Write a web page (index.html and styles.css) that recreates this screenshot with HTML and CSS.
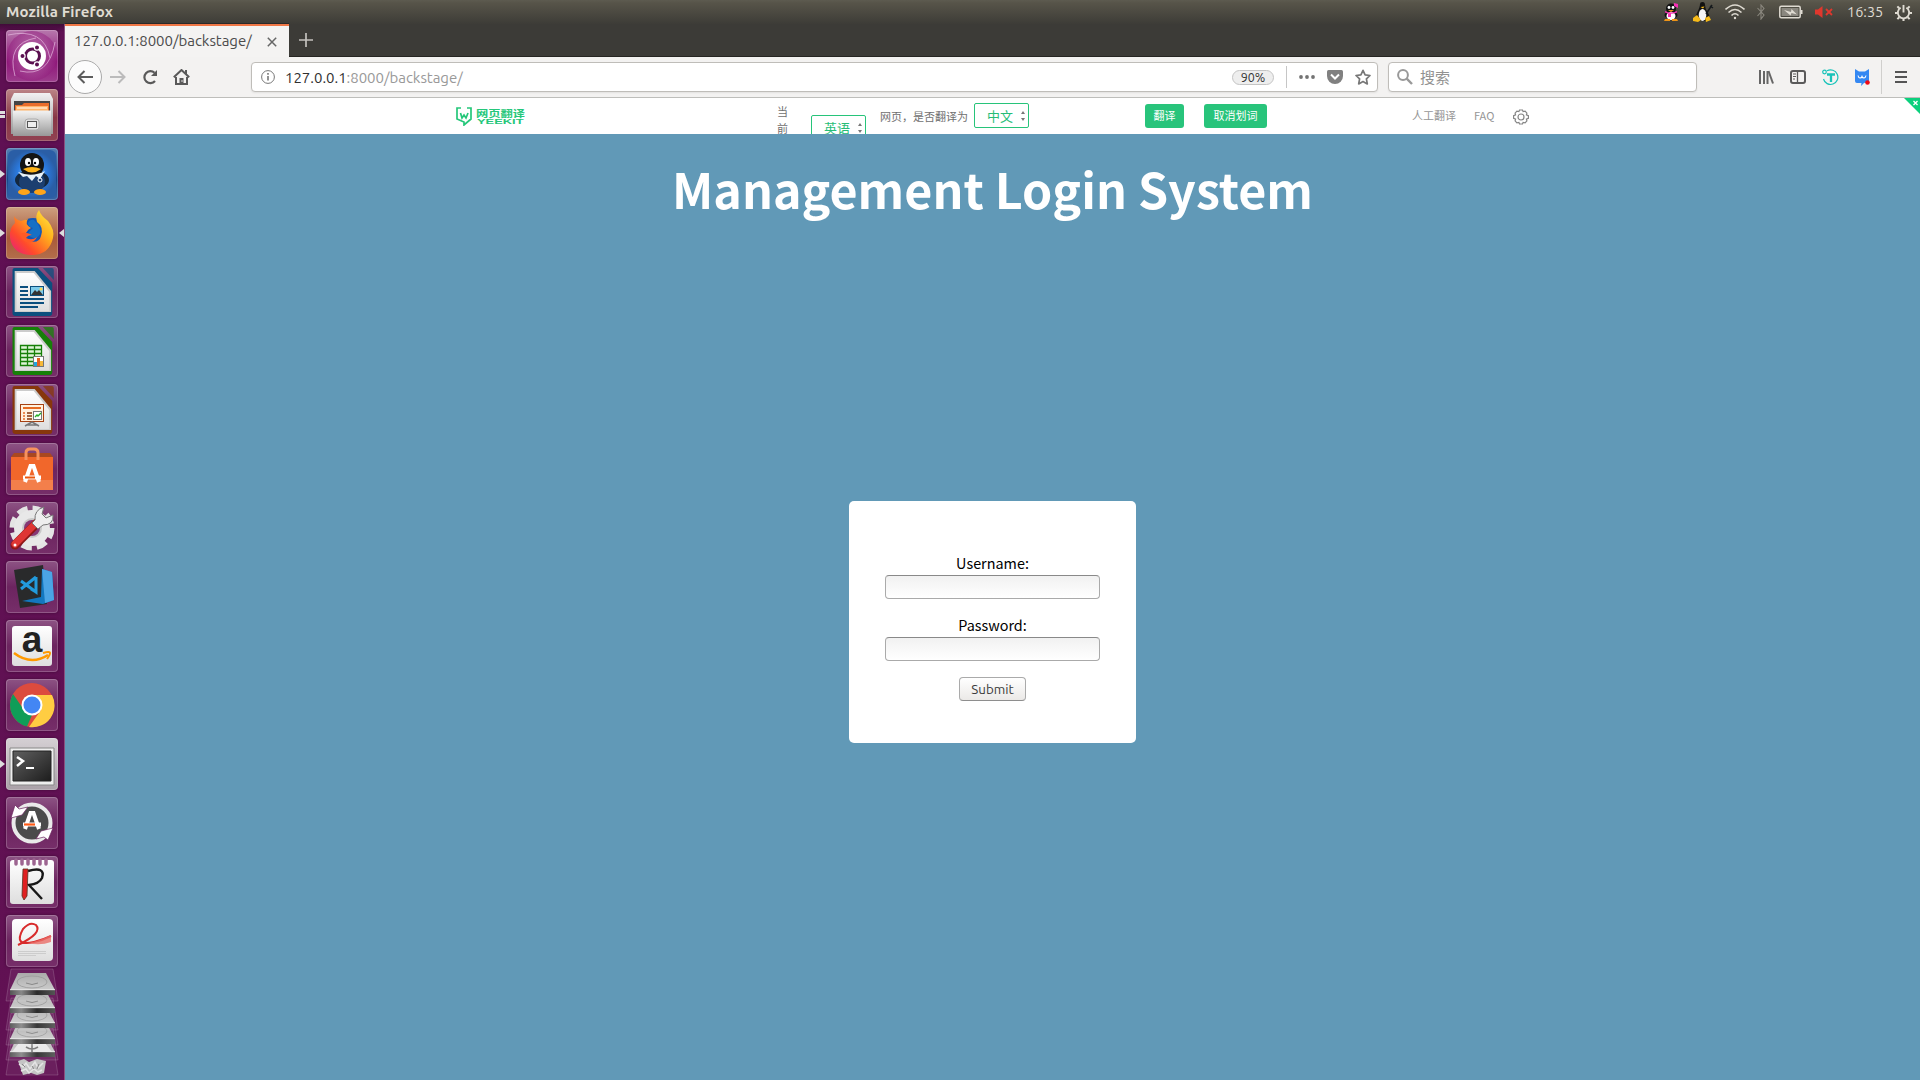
FILE: index.html
```html
<!DOCTYPE html>
<html lang="en">
<head>
<meta charset="utf-8">
<title>127.0.0.1:8000/backstage/</title>
<link rel="stylesheet" href="styles.css">
</head>
<body>
<svg width="0" height="0" class="defs" aria-hidden="true">
  <defs>
    <linearGradient id="silver" x1="0" y1="0" x2="0" y2="1"><stop offset="0" stop-color="#f2f2f2"/><stop offset="1" stop-color="#989898"/></linearGradient>
    <linearGradient id="disktop" x1="0" y1="0" x2="0" y2="1"><stop offset="0" stop-color="#aaa"/><stop offset="1" stop-color="#d6d6d6"/></linearGradient>
    <linearGradient id="diskedge" x1="0" y1="0" x2="1" y2="0"><stop offset="0" stop-color="#555"/><stop offset=".25" stop-color="#888"/><stop offset=".6" stop-color="#2b2b2b"/><stop offset="1" stop-color="#555"/></linearGradient>
    <linearGradient id="paper" x1="0" y1="0" x2="0" y2="1"><stop offset="0" stop-color="#fff"/><stop offset="1" stop-color="#dedede"/></linearGradient>
    <radialGradient id="dash"><stop offset="0" stop-color="#d4a3cb"/><stop offset="1" stop-color="#93207f"/></radialGradient>
    <radialGradient id="glow"><stop offset="0" stop-color="#b8e4ff"/><stop offset=".6" stop-color="#2b7be0"/><stop offset="1" stop-color="#2a5ea6"/></radialGradient>
    <linearGradient id="fox" x1="1" y1="0" x2="0" y2="1"><stop offset="0" stop-color="#fff14a"/><stop offset=".35" stop-color="#ffb01c"/><stop offset=".7" stop-color="#ff4a2b"/><stop offset="1" stop-color="#e3178a"/></linearGradient>
    <linearGradient id="dark" x1="0" y1="0" x2="1" y2="1"><stop offset="0" stop-color="#606060"/><stop offset="1" stop-color="#1d1d1d"/></linearGradient>
    <g id="disk"><path d="M12 0H40L49 17V22H4V17z" fill="url(#disktop)"/><path d="M4 17H49V22H4z" fill="url(#diskedge)"/><path d="M4 16.700H49" stroke="#eee" stroke-width=".8"/><ellipse cx="26" cy="9" rx="15" ry="6" fill="none" stroke="#999" stroke-width=".8"/><path d="M20 10q6 3 12 0" fill="none" stroke="#888"/></g>
    <path id="pane" d="M5 -6H47L52 26H0z" fill="#fff" fill-opacity=".06" stroke="#fff" stroke-opacity=".16"/>
    <g id="pages"><path d="M8 2H31L45 17V47Q45 50 42 50H9Q6 50 6 47V4Q6 2 8 2z" transform="translate(1 0) scale(1.120 1) translate(-1 0)"/><path d="M34 2H44Q46 2 46 4V14z" transform="translate(6 0)" fill-opacity=".75"/><path d="M9 5H31L49 25V46H9z" fill="#ccc"/><path d="M11 7H30L47 26V45H11z" fill="url(#paper)"/></g>
    <g id="aletter" fill="none" stroke="#fff" stroke-width="4"><path d="M-7 8L-1.500 -8H1.500L7 8"/><path d="M-9 3.500H9" stroke-width="4"/></g>
  </defs>
</svg>

<header class="panel">
  <span class="panel-title">Mozilla Firefox</span>
  <div class="tray">
    <svg class="t-qq" viewBox="0 0 16 18"><ellipse cx="8" cy="12" rx="6.500" ry="4" fill="#111"/><ellipse cx="8" cy="5.500" rx="5" ry="5" fill="#111"/><ellipse cx="8" cy="13" rx="4.500" ry="4" fill="#fff"/><circle cx="6" cy="4.500" r="1.400" fill="#fff"/><circle cx="10" cy="4.500" r="1.400" fill="#fff"/><path d="M2 8Q8 11 14 8V9.500Q8 12 2 9.500zM5 10h3v4H5zM11 0l4 1v4l-4-2z" fill="#f52fb4"/><path d="M5 7h6l-3 2zM2 16h5v2H1zM9 16h5l1 2H9z" fill="#ee9418"/></svg>
    <svg class="t-tux" viewBox="0 0 22 22"><path d="M8 3Q8 1 10.500 1T13 4Q13 8 16 12T15 20H6Q2 18 5 12T8 3z" fill="#111"/><ellipse cx="10.500" cy="14" rx="3.800" ry="6" fill="#f4f4f4"/><path d="M8.500 6l4-.5-1.500 2zM1 17l4-3 4 5-3 2-5-1zM13 17l4-2 2 4-5 2z" fill="#f6ba19"/><path d="M14 13L20 4M18 5l3 2" stroke="#15191c" stroke-width="1.500"/></svg>
    <svg class="t-wifi" viewBox="0 0 20 16" fill="none" stroke="#dfdbd2" stroke-width="1.600"><path d="M.5 5.500Q10-3.500 19.500 5.500M3.500 8.500Q10 2.500 16.500 8.500M6.500 11.500Q10 8 13.500 11.500"/><circle cx="10" cy="14" r="1.200" fill="#dfdbd2" stroke="none"/></svg>
    <svg class="t-bt" viewBox="0 0 8 16" fill="none" stroke="#8b887f" stroke-width="1.100"><path d="M.5 4L7 11 4 15V1L7 4.500.5 12"/></svg>
    <svg class="t-bat" viewBox="0 0 24 14"><rect x=".8" y="1.300" width="20.400" height="11.500" rx="1.500" fill="none" stroke="#dfdbd2" stroke-width="1.500"/><rect x="2.500" y="3" width="17" height="8" fill="#8a877f"/><path d="M22 5h1.500v4H22M5 5l7 2 .5-3L18 9.500l-5.500-1.500-1 2.500z" fill="#dfdbd2"/></svg>
    <svg class="t-vol" viewBox="0 0 18 14"><path d="M0 4.500h3L7.500 1v12L3 9.500H0z" fill="#e0372d"/><path d="M11 4l6 6M17 4l-6 6" stroke="#e0372d" stroke-width="1.800"/></svg>
    <span class="clock">16:35</span>
    <svg class="t-gear" viewBox="0 0 18 18" fill="none" stroke="#dfdbd2"><path d="M6 4A6 6 0 1 0 12 4" stroke-width="2"/><path d="M9 1v8" stroke-width="2"/><path d="M4.500 4.500L2.500 2.500M3 9.500H0M4.500 14l-2 2M9 15.500V18M13.500 14l2 2M15 9.500h3M13.500 4.500l2-2" stroke-width="2.200"/></svg>
  </div>
</header>

<div class="desktop">
<nav class="launcher">
  <div class="tile dash"><svg viewBox="0 0 52 52"><circle cx="26" cy="26" r="25" fill="url(#dash)" opacity=".55"/><path d="M2 5Q38-3 44 28M49 12Q43 48 14 41M9 46Q0 13 30 8" fill="none" stroke="#e6b9df" opacity=".7"/><circle cx="26" cy="26" r="14" fill="#fff"/><circle cx="26.500" cy="26" r="7" fill="none" stroke="#5b1050" stroke-width="3"/><g fill="#5b1050" stroke="#fff" stroke-width="1.200"><circle cx="16.500" cy="26" r="2.600"/><circle cx="31" cy="17.500" r="2.600"/><circle cx="31" cy="34.500" r="2.600"/></g></svg></div>
  <div class="tile files running two"><svg viewBox="0 0 52 52"><path d="M8 4H44L47 10V45H5V10z" fill="url(#silver)"/><path d="M8 12H44V24H8z" fill="#444"/><path d="M9 16H16L18 14H43V24H9z" fill="#e96d2b"/><path d="M10 17H42V23H10z" fill="#ffb469"/><path d="M11 19H41" stroke="#fff"/><path d="M7 22H45V47H7z" fill="url(#silver)"/><path d="M7 22H45" stroke="#eee"/><rect x="19" y="30" width="14" height="11" rx="3" fill="#e0e0e0" stroke="#aaa"/><rect x="21.500" y="32.500" width="9" height="6" fill="#eee" stroke="#555"/></svg></div>
  <div class="tile qq running"><svg viewBox="0 0 52 52"><rect x="2" y="2" width="48" height="48" rx="6" fill="url(#glow)"/><ellipse cx="26" cy="32" rx="17" ry="10" fill="#14283f"/><ellipse cx="26" cy="34" rx="13" ry="11" fill="#1c3f70"/><ellipse cx="26" cy="17" rx="12" ry="12" fill="#151515"/><path d="M12 24Q26 30 39 23L34 31 30 28 26 33 21 28 17 29z" fill="#e8f3fa"/><ellipse cx="22" cy="14" rx="3" ry="4" fill="#fff"/><ellipse cx="30" cy="14" rx="3" ry="4" fill="#fff"/><circle cx="23" cy="15" r="1.200"/><circle cx="29" cy="15" r="1.200"/><path d="M17 21Q26 17 35 21Q26 28 17 21z" fill="#ffb419"/><ellipse cx="18" cy="44" rx="6" ry="3" fill="#ffa51a"/><ellipse cx="34" cy="44" rx="6" ry="3" fill="#ffa51a"/><circle cx="34" cy="32" r="2" fill="none" stroke="#fff"/></svg></div>
  <div class="tile firefox running active"><svg viewBox="0 0 52 52"><circle cx="27" cy="26" r="15" fill="#1456b5"/><path d="M8 9Q10 13 15 14L22 12Q18 17 25 21Q22 22 20 26Q15 31 23 34Q33 37 35 29Q38 20 31 15Q29 8 33 3Q35 9 42 14Q49 23 47 31Q43 48 26 48Q7 48 4 31Q3 21 9 16z" fill="url(#fox)"/><path d="M22 16Q24 12 28 13Q36 20 34 27Q31 33 25 30Q22 29 23 25L27 21Q22 20 22 16z" fill="#1670c5"/><path d="M14 27Q19 24 26 28Q22 28 20 31Q26 34 31 30Q28 37 20 35Q15 32 14 27z" fill="#ff5a26"/></svg></div>
  <div class="tile"><svg viewBox="0 0 52 52"><g class="sheet"><use href="#pages" fill="#0c4f7e"/></g><path d="M14 21h8M14 25h8M14 29h8M14 33h24M14 37h24M14 41h18" stroke="#0c4f7e" stroke-width="2"/><rect x="24.500" y="20.500" width="13" height="9" fill="#7ecbea" stroke="#0c4f7e"/><path d="M25 29l4-5 2 2 2-2 4 5z" fill="#333"/><circle cx="35" cy="23" r="1.500" fill="#ffd84c"/></svg></div>
  <div class="tile"><svg viewBox="0 0 52 52"><g class="sheet"><use href="#pages" fill="#168008"/></g><path d="M14.500 20.500h21v20h-21zM14.500 24.500h21M14.500 28.500h21M14.500 32.500h21M14.500 36.500h21M21.500 20v20M28.500 20v20" fill="#dff5d7" stroke="#168008" stroke-width="1.300"/><rect x="27.500" y="31.500" width="10" height="10" fill="#fff" stroke="#777"/><path d="M28 37h3v4h-3z" fill="#21a5df"/><path d="M31 33h3v8h-3z" fill="#e56221"/><path d="M34 36h3v5h-3z" fill="#f7b938"/></svg></div>
  <div class="tile"><svg viewBox="0 0 52 52"><g class="sheet"><use href="#pages" fill="#87370c"/></g><rect x="14.500" y="20.500" width="23" height="17" fill="#fff0dc" stroke="#a64112"/><path d="M17 24h18" stroke="#e56a22" stroke-width="2"/><path d="M21 29h5M21 32h5M21 35h5" stroke="#87370c" stroke-width="1.500"/><path d="M17 29h2M17 32h2M17 35h2" stroke="#e56a22" stroke-width="1.500"/><rect x="27.500" y="27.500" width="8" height="8" fill="#fff" stroke="#777"/><path d="M29 33l2-2 1 1 3-3" fill="none" stroke="#28b128" stroke-width="1.400"/><path d="M26 38l-7 4M26 38l7 4M21 41h10" stroke="#777" stroke-width="1.500"/></svg></div>
  <div class="tile"><svg viewBox="0 0 52 52"><path d="M5 14L8 10H44L47 14z" fill="#a94820"/><path d="M5 14H47V47H5z" fill="#f1672b"/><path d="M5 37H47V47H5z" fill="#f37f4b"/><path d="M20 17V10Q20 6 24 6H28Q32 6 32 10V17" fill="none" stroke="#f6925f" stroke-width="3"/><use href="#aletter" x="26" y="31"/><path d="M19 34.500h10" stroke="#ea570e" stroke-width="2"/></svg></div>
  <div class="tile"><svg viewBox="0 0 52 52"><circle cx="26" cy="26" r="19" fill="none" stroke="#e4e4e4" stroke-width="7" stroke-dasharray="10 4.920"/><circle cx="26" cy="26" r="14" fill="#c8c8c8" stroke="#e8e8e8" stroke-width="8"/><circle cx="26" cy="26" r="8" fill="#863875"/><path d="M9 43L31 21" stroke="#8f1717" stroke-width="9" stroke-linecap="round"/><path d="M9 42L30 21" stroke="#df3634" stroke-width="7" stroke-linecap="round"/><path d="M29 18Q28 8 38 5L36 12 40 16 47 13Q48 23 37 23L32 27 26 21z" fill="#eee" stroke="#777"/><circle cx="9" cy="43" r="1.500" fill="#fff"/></svg></div>
  <div class="tile"><svg viewBox="0 0 52 52"><path d="M8 9L37 4 41 43 14 47z" fill="#292a2b"/><path d="M36 8L46 11 48 39 37 43 16 40 35 36z" fill="#1277bf"/><path d="M36 8L46 11 48 39 39 42z" fill="#4ba4e5"/><path d="M30 16V31L15 20M30 16L15 28M30 31L25 28" fill="none" stroke="#229bdd" stroke-width="3"/></svg></div>
  <div class="tile"><svg viewBox="0 0 52 52"><rect x="6" y="6" width="40" height="40" rx="3" fill="url(#paper)"/><text x="26" y="32" text-anchor="middle" class="amazon">a</text><path d="M8 33Q25 46 42 35" fill="none" stroke="#f90" stroke-width="2.500"/><path d="M37 33Q44 31 44 33T41 39" fill="none" stroke="#f90" stroke-width="2"/></svg></div>
  <div class="tile"><svg viewBox="0 0 52 52"><circle cx="26" cy="26" r="22" fill="#dc4b3e"/><path d="M7 15L18 31 26 36 21 47.500A22 22 0 0 1 7 15z" fill="#109d58"/><path d="M26 16H46A22 22 0 0 1 23 48L35 31z" fill="#ffcd42"/><circle cx="26" cy="26" r="10.500" fill="#fff"/><circle cx="26" cy="26" r="8.500" fill="#4386f4"/></svg></div>
  <div class="tile terminal running"><svg viewBox="0 0 52 52"><path d="M4 10H48V47H4z" fill="#eee" stroke="#888"/><path d="M7 13H45V43H7z" fill="url(#dark)" stroke="#222"/><path d="M11 19l6 4-6 5" fill="none" stroke="#fff" stroke-width="2.500"/><path d="M20 30h8" stroke="#fff" stroke-width="2"/></svg></div>
  <div class="tile"><svg viewBox="0 0 52 52"><circle cx="26" cy="26" r="17" fill="#4b4b4b"/><circle cx="26" cy="26" r="18.500" fill="none" stroke="#eaeaea" stroke-width="4"/><path d="M5 21L9 8 13 12 22 10 16 18zM47 31L42 43 38 40 30 42 35 34z" fill="#fff" stroke="#6c245f" stroke-width=".7"/><use href="#aletter" x="26" y="24"/><path d="M18 27.500h11" stroke="#ff5b17" stroke-width="2.200"/></svg></div>
  <div class="tile"><svg viewBox="0 0 52 52"><rect x="4" y="4" width="44" height="44" rx="3" fill="url(#paper)"/><path d="M10 4v4M16 4v4M22 4v4M28 4v4M34 4v4M40 4v4" stroke="#9d6591" stroke-width="3.500" stroke-linecap="round"/><path d="M22 15Q40 10 36 22Q33 28 23 29L36 43" fill="none" stroke="#171717" stroke-width="2.400"/><path d="M17 13h5l-1 27-3 4-2-4z" fill="#e02020" stroke="#532" stroke-width=".8"/></svg></div>
  <div class="tile"><svg viewBox="0 0 52 52"><rect x="6" y="4" width="41" height="42" rx="4" fill="url(#paper)"/><path d="M12 30Q37 18 30 10Q24 6 17 14Q7 32 28 27Q37 25 45 21" fill="none" stroke="#d82b2b" stroke-width="2"/><path d="M22 28Q33 26 45 20V27Q34 31 22 28z" fill="#ea6e68" opacity=".8"/><path d="M12 36.500h28M12 38.500h28M12 40.500h18" stroke="#ccc"/></svg></div>
  <svg class="stack" viewBox="0 0 56 112"><g transform="translate(2 0)"><use href="#pane" y="81"/><use href="#disk" y="67"/><path d="M12 76H40L46 84H6z" fill="#e8e8e8"/><path d="M20 79q6 4 12 0M26 76v8" fill="none" stroke="#777" stroke-width="1.600"/><use href="#pane" y="66"/><use href="#disk" y="54"/><use href="#pane" y="51"/><use href="#disk" y="38"/><use href="#pane" y="36"/><use href="#disk" y="23"/><use href="#pane" y="7"/><use href="#disk" y="5"/><path d="M12 93L18 91 23 94 31 91 40 93 38 105 31 107 25 105 17 107z" fill="#c4c4c4"/><path d="M13 96l4 3 3-4 4 6 5-7 3 6 5-5M15 103l5-2 3 4 5-4 4 3 4-2" fill="none" stroke="#e5e5e5" stroke-width="1.500"/><path d="M16 96l3 3M26 98l2 3M33 96l-2 5" stroke="#888"/></g></svg>
</nav>

<main class="browser">
  <div class="tabs">
    <div class="tab"><span class="tab-label">127.0.0.1:8000/backstage/</span><svg class="close" viewBox="0 0 10 10"><path d="M.8.8l8.400 8.400M9.200.8L.8 9.200" stroke="#666" stroke-width="1.500"/></svg></div>
    <svg class="newtab" viewBox="0 0 14 14"><path d="M7 0v14M0 7h14" stroke="#c3c1bd" stroke-width="1.700"/></svg>
  </div>
  <div class="toolbar">
    <div class="back"><svg width="16" height="14" viewBox="0 0 16 14" fill="none" stroke="#5c5c5c" stroke-width="2"><path d="M16 7H1.500M7.500 1L1.500 7l6 6"/></svg></div>
    <div class="slot"><svg width="16" height="14" viewBox="0 0 16 14" fill="none" stroke="#bbb" stroke-width="2"><path d="M0 7h14.500M8.500 1l6 6-6 6"/></svg></div>
    <div class="slot"><svg width="16" height="16" viewBox="0 0 16 16" fill="none" stroke="#595959" stroke-width="2.200"><path d="M13 12A6 6 0 1 1 12.500 3.800"/><path d="M15 1v6H9z" fill="#595959" stroke="none"/></svg></div>
    <div class="slot home"><svg width="17" height="16" viewBox="0 0 17 16"><path d="M3 8v7h11V8M.8 8.300L8.500 1l7.700 7.300M13 1v4" fill="none" stroke="#595959" stroke-width="2"/><path d="M6.500 9h4v6h-4z" fill="#595959"/><circle cx="9" cy="12" r=".8" fill="#eee"/></svg></div>
    <div class="urlbar">
      <svg class="info" viewBox="0 0 14 14"><circle cx="7" cy="7" r="6.400" fill="none" stroke="#777"/><path d="M7 6v4.500M7 3v1.800" stroke="#777" stroke-width="1.600"/></svg>
      <span class="url"><b>127.0.0.1</b>:8000/backstage/</span>
      <span class="zoom">90%</span><i class="rule"></i>
      <svg class="dots" viewBox="0 0 16 4" fill="#737373"><circle cx="2" cy="2" r="1.900"/><circle cx="8" cy="2" r="1.900"/><circle cx="14" cy="2" r="1.900"/></svg>
      <svg class="pocket" viewBox="0 0 16 14"><path d="M1.500 0h13Q16 0 16 1.500V6a8 8 0 0 1-16 0V1.500Q0 0 1.500 0z" fill="#808080"/><path d="M4 4.500l4 4 4-4" fill="none" stroke="#fff" stroke-width="2"/></svg>
      <svg class="star" viewBox="0 0 16 16"><path d="M8 1.300l2.100 4.500 4.900.7-3.600 3.400.9 5L8 12.500l-4.300 2.400.9-5L1 6.500l4.900-.7z" fill="none" stroke="#777" stroke-width="1.700" stroke-linejoin="round"/></svg>
    </div>
    <div class="search"><svg width="16" height="16" viewBox="0 0 16 16" fill="none" stroke="#999"><circle cx="6" cy="6" r="4.900" stroke-width="2"/><path d="M9.700 9.700L15 15" stroke-width="2.400"/></svg><span>搜索</span></div>
    <div class="tools">
      <div class="slot"><svg width="16" height="14" viewBox="0 0 16 14" stroke="#666" stroke-width="2"><path d="M2 0v14M6 1v13M9.500 1v13" fill="none"/><path d="M10.500 1L15 13.500" fill="none"/></svg></div>
      <div class="slot"><svg width="16" height="14" viewBox="0 0 16 14" fill="none" stroke="#5a5a5a"><rect x="1" y="1" width="14" height="12" rx="2" stroke-width="2"/><path d="M7.500 1v12" stroke-width="1.300"/><path d="M3 4h3M3 6.500h3M3 9h2"/></svg></div>
      <div class="slot"><svg width="17" height="17" viewBox="0 0 17 17" fill="none" stroke="#18c3b9"><path d="M5 1.800A7.300 7.300 0 1 1 1.500 10" stroke-width="1.200"/><circle cx="2.500" cy="3" r="1.800" stroke-width="1.200"/><path d="M5 5.500h8M9 5v8" stroke-width="2.300"/></svg></div>
      <div class="slot"><svg width="16" height="17" viewBox="0 0 16 17"><path d="M1 0l4 2.500h6L15 0v12.500L10 14l-3 3 .5-3H3Q1 14 1 12z" fill="#3488f2"/><path d="M4 6.500Q4.500 9 6 9T8 7.500Q8.500 9 10 9T12 6.500" fill="none" stroke="#fff" stroke-width="1.100"/><circle cx="13.500" cy="13.500" r="2.300" fill="#f00914"/></svg></div>
      <div class="slot menu"><svg width="12" height="12" viewBox="0 0 12 12" stroke="#555" stroke-width="2"><path d="M0 1h12M0 6h12M0 11h12"/></svg></div>
    </div>
  </div>

  <div class="translate">
    <div class="logo">
      <svg class="mark" viewBox="0 0 17 19"><path d="M5 1H1v11l7 3v3l7-6V1h-4M1 3v6M4.500 6l1.500 5L8 8l2 3 2-5" fill="none" stroke="#25c77a" stroke-width="1.700"/></svg>
      <svg class="wordmark" viewBox="0 0 49 18"><text transform="translate(0 9.500) scale(1.020 .78)" class="logo-cn">网页翻译</text><text transform="translate(1 16.500) scale(1.720 1)" class="logo-en">YEEKIT</text></svg>
    </div>
    <span class="current">当前</span>
    <span class="select first">英语<svg viewBox="0 0 6 12"><path d="M1 4l2-3 2 3zM1 8l2 3 2-3z"/></svg></span>
    <span class="question">网页，是否翻译为</span>
    <span class="select">中文<svg viewBox="0 0 6 12"><path d="M1 4l2-3 2 3zM1 8l2 3 2-3z"/></svg></span>
    <span class="green go">翻译</span>
    <span class="green cancel">取消划词</span>
    <span class="link human">人工翻译</span>
    <span class="link faq">FAQ</span>
    <svg class="cog" viewBox="0 0 16 16" fill="none" stroke="#858585" stroke-width="1.200"><circle cx="8" cy="8" r="3"/><path d="M6.500 1h3l.6 1.600 2-.5 1.800 2-.5 1.800 2 .8v2.600l-2 .8.5 1.800-1.800 2-2-.5L9.500 15h-3l-.6-1.600-2 .5-1.800-2 .5-1.800-2-.8V6.700l2-.8-.5-1.800 1.800-2 2 .5z"/></svg>
    <svg class="corner" viewBox="0 0 16 16"><path d="M0 0h16v16z" fill="#0bd07d"/><path d="M9.500 3l4 4M13.500 3l-4 4" stroke="#fff" stroke-width="1.300"/></svg>
  </div>

  <section class="page">
    <h1>Management Login System</h1>
    <form class="card">
      <label for="user">Username:</label>
      <input id="user" type="text">
      <label for="pass">Password:</label>
      <input id="pass" type="password">
      <button type="button">Submit</button>
    </form>
  </section>
</main>
</div>
</body>
</html>
```
FILE: styles.css
```css
* { box-sizing: border-box; }
body { margin: 0; width: 1920px; height: 1080px; overflow: hidden; font-family: Ubuntu, "Noto Sans", "Noto Sans CJK SC", sans-serif; }
svg { display: block; flex: none; }
.defs { position: absolute; }

.panel { height: 24px; display: flex; align-items: center; justify-content: space-between; padding: 0 8px 0 6px; color: #dfdbd2; background: linear-gradient(#5d5b50, #575449 12%, #3d3c37); }
.panel-title { font-size: 15px; font-weight: 700; line-height: 24px; letter-spacing: .13px; }
.tray { display: flex; align-items: center; height: 24px; }
.t-qq { width: 16px; height: 18px; margin-right: 13px; }
.t-tux { width: 22px; height: 22px; margin-right: 11px; }
.t-wifi { width: 20px; height: 16px; margin-right: 12px; }
.t-bt { width: 8px; height: 16px; margin-right: 14px; }
.t-bat { width: 24px; height: 14px; margin-right: 12px; }
.t-vol { width: 18px; height: 14px; margin-right: 14px; }
.clock { width: 37px; font-size: 14.500px; line-height: 24px; margin-right: 11px; white-space: nowrap; }
.t-gear { width: 17px; height: 17px; }

.desktop { display: flex; height: 1056px; }
.launcher { width: 65px; flex: none; padding: 6px 0 0 6px; background: linear-gradient(#410b39, #5f1053 8px, #611153); border-right: 1px solid #89507f; display: flex; flex-direction: column; gap: 7px; }
.tile { position: relative; width: 52px; height: 52px; flex: none; border-radius: 4px; background: linear-gradient(#8d5384, #6c245f 50%, #762e69); box-shadow: inset 0 0 0 1px rgba(255,255,255,.2), 0 0 3px rgba(30,0,25,.5); }
.tile svg { width: 52px; height: 52px; }
.sheet { transform: translate(.5px, 0) scale(.91, 1); }
.dash { background: linear-gradient(#b778ad, #8e1578 60%, #9d3e8d); }
.files { background: linear-gradient(#bc8587, #883745 55%, #914252); }
.qq { background: linear-gradient(#537fb4, #17478a 60%, #3665a6); }
.firefox { background: linear-gradient(#cda080, #aa5a3a 60%, #b36e4b); }
.terminal { background: linear-gradient(#d5d0d4, #aaa1a8); }
.running::before, .active::after { content: ""; position: absolute; top: 22px; border: 4px solid transparent; }
.running::before { left: -6px; border-left: 5px solid #ddd; border-right: 0; }
.active::after { right: -6px; border-right: 5px solid #ddd; border-left: 0; }
.two::before { top: 22px; width: 5px; height: 1px; border: solid #ddd; border-width: 3px 0; }
.amazon { font: 700 37px "Liberation Sans", sans-serif; fill: #222; }
.stack { width: 56px; height: 112px; margin: -6px 0 0 -2px; }

.browser { flex: 1; min-width: 0; display: flex; flex-direction: column; }
.tabs { height: 33px; flex: none; display: flex; align-items: flex-start; background: #3c3b37; border-bottom: 1px solid #262522; }
.tab { width: 224px; height: 33px; flex: none; display: flex; align-items: center; padding: 0 12px 0 9px; background: #f4f3f2; border-top: 2px solid #f07746; box-shadow: 0 -1px #2c2a29; }
.tab-label { flex: 1; color: #4c4c4c; font-size: 15px; line-height: 29px; padding-bottom: 2px; letter-spacing: -.03px; white-space: nowrap; }
.close { width: 10px; height: 10px; }
.newtab { width: 14px; height: 14px; margin: 9px 0 0 10px; }
.toolbar { height: 41px; flex: none; display: flex; align-items: center; padding: 0 3px; background: #f3f2f1; border-bottom: 1px solid #bebebb; }
.back { width: 34px; height: 34px; border: 1px solid #aaa; border-radius: 50%; background: #fcfcfc; display: flex; align-items: center; justify-content: center; }
.slot { width: 32px; height: 34px; display: flex; align-items: center; justify-content: center; }
.home { padding-right: 1px; }
.urlbar, .search { height: 30px; flex: none; display: flex; align-items: center; border: 1px solid #bfbdb9; border-radius: 4px; background: #fff; box-shadow: 0 1px 2px rgba(0,0,0,.07); }
.urlbar { width: 1127px; margin: 0 10px 0 53px; padding: 0 6px 0 9px; }
.info { width: 14px; height: 14px; margin-right: 10px; }
.url { flex: 1; color: #999; font-size: 15px; line-height: 28px; padding-top: 1px; letter-spacing: -.03px; }
.url b { color: #303030; font-weight: 400; }
.zoom { width: 42px; height: 15px; border: 1px solid #c4c4c4; border-radius: 8px; background: #eee; color: #333; font-size: 12.500px; line-height: 13px; text-align: center; }
.rule { width: 1px; height: 22px; margin: 0 12px 0 12px; background: #c6c6c6; }
.dots { width: 16px; height: 4px; margin-right: 12px; }
.pocket { width: 16px; height: 14px; margin-right: 12px; }
.star { width: 16px; height: 16px; }
.search { width: 309px; padding-left: 8px; gap: 7px; color: #929292; font: 15px/28px "Noto Sans CJK SC", sans-serif; }
.tools { display: flex; margin-left: auto; }
.menu { width: 39px; margin-left: 3px; margin-right: -3px; padding-left: 13px; border-left: 1px solid #d0cfcd; justify-content: flex-start; }

.translate { position: relative; height: 36px; flex: none; overflow: hidden; display: flex; align-items: flex-start; background: #fff; font-family: "Noto Sans CJK SC", sans-serif; font-size: 11px; color: #6f6f6f; white-space: nowrap; }
.logo { width: 69px; height: 19px; flex: none; display: flex; gap: 3px; margin: 9px 0 0 391px; }
.mark { width: 17px; height: 19px; }
.wordmark { width: 49px; height: 18px; }
.logo-cn { font: 700 12px "Noto Sans CJK SC", sans-serif; fill: #25c77a; }
.logo-en { font: 700 7.500px "Liberation Sans", sans-serif; fill: #25c77a; }
.current { width: 11px; margin: 5px 23px 0 252px; line-height: 17px; white-space: normal; }
.select { width: 55px; height: 25px; flex: none; display: flex; align-items: center; justify-content: space-between; margin-top: 5px; padding: 0 2px 0 12px; border: 1px solid #27c47a; border-radius: 2px; color: #27bd77; font-size: 13px; line-height: 25px; }
.select svg { width: 6px; height: 12px; fill: #777; }
.first { margin: 17px 14px 0 0; }
.question { width: 94px; line-height: 36px; }
.green { height: 24px; margin-top: 6px; border-radius: 3px; background: #28c47b; color: #fff; line-height: 23px; text-align: center; }
.go { width: 39px; margin-left: 116px; }
.cancel { width: 63px; margin-left: 20px; }
.link { color: #969696; line-height: 35px; }
.human { width: 44px; margin-left: 145px; }
.faq { width: 22px; margin-left: 18px; }
.cog { width: 16px; height: 16px; margin: 11px 0 0 17px; }
.corner { position: absolute; top: 0; right: 0; width: 16px; height: 16px; }

.page { flex: 1; display: flex; flex-direction: column; align-items: center; background: #6199b7; font-family: "Noto Sans CJK SC", sans-serif; }
h1 { margin: 17px 0 0; color: #fff; font-size: 48.400px; line-height: 74px; font-weight: 700; white-space: nowrap; }
.card { width: 287px; height: 242px; margin-top: 276px; padding: 50px 36px 0; border-radius: 5px; background: #fff; display: flex; flex-direction: column; align-items: center; }
.card label { color: #000; font-size: 14.400px; line-height: 23px; margin-bottom: 1px; }
.card input { width: 215px; height: 24px; margin: 0 0 14px; padding: 2px 6px; border: 1px solid #aaa; border-top-color: #898989; border-radius: 4px; background: linear-gradient(#f1f1f1, #fff); }
.card button { width: 67px; height: 24px; margin-top: 2px; padding: 1px 0 0; border: 1px solid #aaa; border-bottom-color: #8e8e8e; border-radius: 4px; background: linear-gradient(#fff, #ebe9e7); color: #3c3c3c; font: 13.330px/20px Ubuntu, "Noto Sans", sans-serif; }
```
